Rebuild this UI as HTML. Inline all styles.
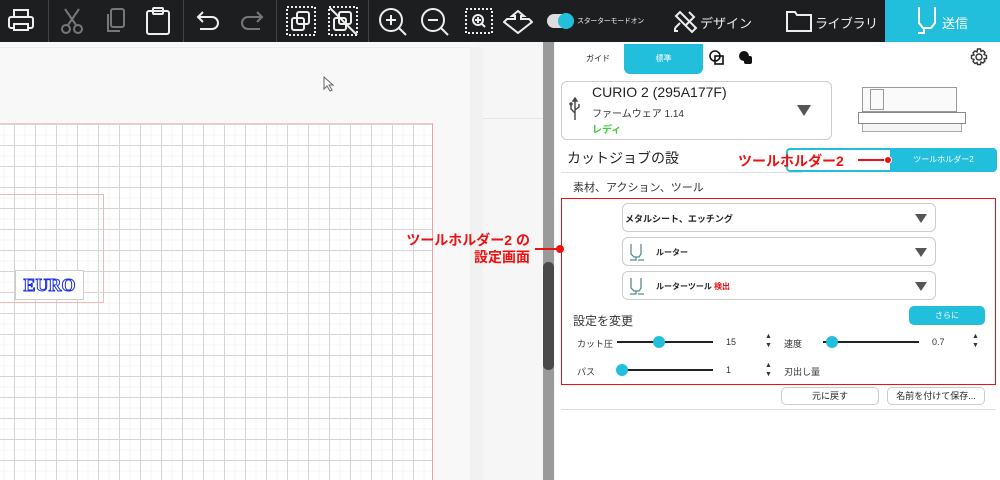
<!DOCTYPE html>
<html><head><meta charset="utf-8"><style>
*{box-sizing:border-box;margin:0;padding:0}
body{width:1000px;height:480px;overflow:hidden;background:#f6f6f6;font-family:"Liberation Sans","Noto Sans CJK JP",sans-serif;position:relative}
.tb{position:absolute;left:0;top:0;width:1000px;height:42px;background:#1d1e20}
.sep{position:absolute;top:0;width:1px;height:42px;background:#444}
.ic{position:absolute;top:6px}
.abs{position:absolute}
.grid{position:absolute;left:0;top:123px;width:433px;height:357px;background-color:#fff;
background-image:linear-gradient(90deg,#d4d4d4 1px,transparent 1px),linear-gradient(#d4d4d4 1px,transparent 1px),linear-gradient(90deg,#f4f4f4 1px,transparent 1px),linear-gradient(#f4f4f4 1px,transparent 1px);
background-size:21px 21px,21px 21px,10.5px 10.5px,10.5px 10.5px;background-position:14px 0,0 0,14px 0,0 0;border-right:1px solid #f0a0a0;border-top:1px solid #f6c8c8}
.panel{position:absolute;left:555px;top:42px;width:445px;height:438px;background:#fff}
.dd{position:absolute;left:622px;width:314px;height:29px;border:1px solid #ccc;border-radius:6px;background:#fff;font-size:9px;font-weight:bold;color:#222}
.tri{position:absolute;right:8px;top:10px;width:0;height:0;border-left:6px solid transparent;border-right:6px solid transparent;border-top:9px solid #555}
.red{color:#f01010;font-weight:bold}
.sl{position:absolute;height:2px;background:#222}
.kn{position:absolute;width:12px;height:12px;border-radius:50%;background:#22bfdc}
.s{font-size:9px;color:#333;position:absolute}
.btn{position:absolute;height:18px;border:1px solid #ccc;border-radius:5px;background:#fff;font-size:9px;text-align:center;line-height:16px;color:#222}
</style></head><body>
<div class="tb">
<svg class="ic" style="left:8px;top:9px" width="26" height="24" viewBox="0 0 26 24" fill="none" stroke="#eee" stroke-width="2"><rect x="6" y="1" width="14" height="7"/><rect x="1" y="8" width="24" height="11" rx="2"/><rect x="6" y="15" width="14" height="6" fill="#1d1e20"/></svg>
<div class="sep" style="left:48px"></div>
<svg class="abs" style="left:60px;top:8px" width="24" height="26" viewBox="0 0 24 26" fill="none" stroke="#777" stroke-width="2"><path d="M5 1L16 17M19 1L8 17"/><circle cx="6" cy="21" r="4"/><circle cx="18" cy="21" r="4"/></svg>
<svg class="abs" style="left:104px;top:8px" width="22" height="26" viewBox="0 0 22 26" fill="none" stroke="#777" stroke-width="2"><rect x="7" y="1" width="13" height="18" rx="2"/><path d="M4 6v17h12"/></svg>
<svg class="abs" style="left:145px;top:7px" width="26" height="28" viewBox="0 0 26 28" fill="none" stroke="#eee" stroke-width="2"><rect x="2" y="4" width="22" height="23" rx="2"/><rect x="8" y="1" width="10" height="6" rx="1"/></svg>
<div class="sep" style="left:183px"></div>
<svg class="abs" style="left:196px;top:10px" width="24" height="22" viewBox="0 0 24 22" fill="none" stroke="#eee" stroke-width="2"><path d="M7 2L2 7l5 5M2 7h14a6 6 0 010 12H4"/></svg>
<svg class="abs" style="left:240px;top:10px" width="24" height="22" viewBox="0 0 24 22" fill="none" stroke="#777" stroke-width="2"><path d="M17 2l5 5-5 5M22 7H8a6 6 0 000 12h12"/></svg>
<div class="sep" style="left:276px"></div>
<svg class="abs" style="left:286px;top:6px" width="30" height="30" viewBox="0 0 30 30" fill="none" stroke="#eee" stroke-width="2"><rect x="1" y="1" width="28" height="28" stroke-dasharray="2 2"/><rect x="11" y="6" width="12" height="12" rx="2"/><rect x="6" y="12" width="12" height="12" rx="2"/></svg>
<svg class="abs" style="left:328px;top:6px" width="30" height="30" viewBox="0 0 30 30" fill="none" stroke="#eee" stroke-width="2"><rect x="1" y="1" width="28" height="28" stroke-dasharray="2 2"/><rect x="11" y="6" width="12" height="12" rx="2"/><rect x="6" y="12" width="12" height="12" rx="2"/><path d="M2 2l27 27"/></svg>
<div class="sep" style="left:368px"></div>
<svg class="abs" style="left:378px;top:7px" width="30" height="30" viewBox="0 0 30 30" fill="none" stroke="#eee" stroke-width="2"><circle cx="13" cy="13" r="11"/><path d="M21 21l7 7M13 8v10M8 13h10"/></svg>
<svg class="abs" style="left:420px;top:7px" width="30" height="30" viewBox="0 0 30 30" fill="none" stroke="#eee" stroke-width="2"><circle cx="13" cy="13" r="11"/><path d="M21 21l7 7M8 13h10"/></svg>
<svg class="abs" style="left:465px;top:8px" width="28" height="28" viewBox="0 0 28 28" fill="none" stroke="#eee" stroke-width="2"><rect x="1" y="1" width="26" height="24" stroke-dasharray="2 2"/><circle cx="13" cy="12" r="5"/><path d="M16 15l4 4M13 9v6M10 12h6"/></svg>
<svg class="abs" style="left:503px;top:10px" width="30" height="24" viewBox="0 0 30 24" fill="none" stroke="#eee" stroke-width="2"><path d="M15 1l6 5h-3v3h8l3 3-14 11L1 12l3-3h8V6H9z"/></svg>
<div class="abs" style="left:547px;top:14px;width:26px;height:14px;border-radius:7px;background:#ddd"></div>
<div class="abs" style="left:558px;top:13px;width:16px;height:16px;border-radius:50%;background:#22bfdc"></div>
<div class="abs" style="left:577px;top:16px;font-size:7px;color:#eee;letter-spacing:-0.3px">スターターモードオン</div>
<svg class="abs" style="left:672px;top:8px" width="26" height="26" viewBox="0 0 26 26" fill="none" stroke="#eee" stroke-width="2"><path d="M4 8l4-4 16 16-4 4zM3 20l5-5M17 4l5 5-9 9M3 20v3h3"/></svg>
<div class="abs" style="left:700px;top:13px;font-size:13px;color:#eee">デザイン</div>
<svg class="abs" style="left:786px;top:10px" width="26" height="22" viewBox="0 0 26 22" fill="none" stroke="#eee" stroke-width="2"><path d="M1 2h8l2 3h14v16H1z"/></svg>
<div class="abs" style="left:815px;top:13px;font-size:13px;color:#eee;letter-spacing:-0.5px">ライブラリ</div>
<div class="abs" style="left:885px;top:0;width:115px;height:42px;background:#22bfdc"></div>
<svg class="abs" style="left:917px;top:6px" width="20" height="30" viewBox="0 0 20 30" fill="none" stroke="#fff" stroke-width="2"><path d="M2 1v16l4 5h8l4-5V1M7 22v5H1"/></svg>
<div class="abs" style="left:942px;top:13px;font-size:13px;color:#fff">送信</div>
</div>
<div class="abs" style="left:0;top:42px;width:478px;height:438px;background:#f8f8f8"></div>
<div class="abs" style="left:0;top:47px;width:470px;height:1px;background:#ececec"></div>
<div class="abs" style="left:470px;top:47px;width:13px;height:433px;background:#f1f1f1"></div>
<div class="abs" style="left:483px;top:118px;width:60px;height:1px;background:#e6e6e6"></div>
<svg class="abs" style="left:323px;top:76px" width="12" height="16" viewBox="0 0 12 16"><path d="M1 1v12l3-3 3 5 2-1-3-5h4z" fill="#fff" stroke="#666"/></svg>
<div class="grid"></div>
<div class="abs" style="left:0;top:194px;width:104px;height:109px;border:1px solid #f0b8b8;border-left:none"></div>
<div class="abs" style="left:15px;top:270px;width:69px;height:30px;background:#fff;border:1px solid #ccc;font-family:'Liberation Serif',serif;font-weight:bold;font-size:18px;color:#fff;-webkit-text-stroke:1px #1a2ee6;text-align:center;line-height:28px">EURO</div>
<div class="abs" style="left:543px;top:42px;width:11px;height:438px;background:#9a9a9a"></div>
<div class="abs" style="left:543px;top:262px;width:11px;height:108px;background:#4a4a4a;border-radius:5px"></div>
<div class="panel"></div>
<div class="abs" style="left:586px;top:53px;font-size:8px;color:#222">ガイド</div>
<div class="abs" style="left:624px;top:44px;width:79px;height:30px;background:#22bfdc;border-radius:0 0 6px 6px;color:#fff;font-size:8px;text-align:center;line-height:30px">標準</div>
<svg class="abs" style="left:709px;top:50px" width="16" height="16" viewBox="0 0 16 16" fill="none" stroke="#111" stroke-width="1.6"><circle cx="6" cy="6" r="5"/><rect x="6" y="6" width="8" height="8"/></svg>
<svg class="abs" style="left:738px;top:50px" width="16" height="16" viewBox="0 0 16 16"><circle cx="6" cy="6" r="5" fill="#111"/><rect x="6" y="6" width="8" height="8" rx="2" fill="#111"/></svg>
<svg class="abs" style="left:970px;top:48px" width="18" height="18" viewBox="0 0 18 18" fill="none" stroke="#333" stroke-width="1.4"><circle cx="9" cy="9" r="3"/><path d="M7.5 1h3l.5 2.5 2-1 2 2-1 2L16.5 7.5v3l-2.5.5 1 2-2 2-2-1-.5 2.5h-3L7 14.5l-2 1-2-2 1-2L1.5 10.5v-3L4 7 3 5l2-2 2 1z"/></svg>
<div class="abs" style="left:561px;top:81px;width:271px;height:59px;border:1px solid #ccc;border-radius:6px;background:#fff"></div>
<svg class="abs" style="left:569px;top:97px" width="12" height="24" viewBox="0 0 12 24" fill="none" stroke="#444" stroke-width="1.4"><path d="M6 1v22M6 1l-2 3h4zM6 16L2 12V8M6 13l4-3V7"/><circle cx="2" cy="7" r="1"/></svg>
<div class="abs" style="left:592px;top:84px;font-size:14px;color:#222">CURIO 2 (295A177F)</div>
<div class="abs" style="left:592px;top:105px;font-size:10px;color:#333">ファームウェア 1.14</div>
<div class="abs" style="left:592px;top:121px;font-size:10px;color:#3ccf3c;font-weight:bold">レディ</div>
<div class="abs" style="left:797px;top:105px;width:0;height:0;border-left:7px solid transparent;border-right:7px solid transparent;border-top:11px solid #555"></div>
<div class="abs" style="left:862px;top:87px;width:95px;height:25px;border:1px solid #999;background:#fafafa"></div>
<div class="abs" style="left:870px;top:89px;width:14px;height:21px;border:1px solid #999"></div>
<div class="abs" style="left:858px;top:112px;width:108px;height:12px;border:1px solid #888;background:#fff"></div>
<div class="abs" style="left:862px;top:124px;width:100px;height:8px;border:1px solid #aaa;border-top:none;background:#f4f4f4"></div>
<div class="abs" style="left:567px;top:148px;font-size:14px;color:#222">カットジョブの設</div>
<div class="abs" style="left:561px;top:172px;width:242px;height:1px;background:#ddd"></div>
<div class="abs" style="left:786px;top:148px;width:106px;height:24px;border:2px solid #22bfdc;border-radius:4px 0 0 4px;background:#fff"></div>
<div class="abs" style="left:890px;top:148px;width:107px;height:24px;background:#22bfdc;border-radius:0 4px 4px 0;color:#fff;font-size:8px;text-align:center;line-height:24px">ツールホルダー2</div>
<div class="abs red" style="left:738px;top:151px;font-size:14px">ツールホルダー2</div>
<div class="abs" style="left:858px;top:159px;width:30px;height:2px;background:#f01010"></div>
<div class="abs" style="left:884px;top:156px;width:8px;height:8px;border-radius:50%;background:#f01010;border:1px solid #fff"></div>
<div class="abs" style="left:573px;top:179px;font-size:11px;color:#333">素材、アクション、ツール</div>
<div class="abs" style="left:561px;top:198px;width:435px;height:187px;border:1.5px solid #f01010"></div>
<div class="abs red" style="left:380px;top:232px;font-size:14px;text-align:right;width:150px;line-height:17px">ツールホルダー2 の<br>設定画面</div>
<div class="abs" style="left:535px;top:248px;width:24px;height:2px;background:#f01010"></div>
<div class="abs" style="left:556px;top:245px;width:8px;height:8px;border-radius:50%;background:#f01010"></div>
<div class="dd" style="top:203px"><span class="abs" style="left:2px;top:8px">メタルシート、エッチング</span><div class="tri"></div></div>
<div class="dd" style="top:237px"><svg class="abs" style="left:6px;top:5px" width="16" height="18" viewBox="0 0 16 18" fill="none" stroke="#5a8a8a" stroke-width="1.3"><path d="M2 1v10l3 3h5l2-3V1M7 14v3H1M9 17h6"/></svg><span class="abs" style="left:33px;top:9px;font-size:8px">ルーター</span><div class="tri"></div></div>
<div class="dd" style="top:271px"><svg class="abs" style="left:6px;top:5px" width="16" height="18" viewBox="0 0 16 18" fill="none" stroke="#5a8a8a" stroke-width="1.3"><path d="M2 1v10l3 3h5l2-3V1M7 14v3H1M9 17h6"/></svg><span class="abs" style="left:33px;top:9px;font-size:8px">ルーターツール <span class="red">検出</span></span><div class="tri"></div></div>
<div class="abs" style="left:573px;top:312px;font-size:12px;color:#333">設定を変更</div>
<div class="abs" style="left:909px;top:306px;width:76px;height:19px;background:#22bfdc;border-radius:5px;color:#fff;font-size:8px;text-align:center;line-height:19px">さらに</div>
<div class="s" style="left:577px;top:337px">カット圧</div>
<div class="sl" style="left:617px;top:341px;width:96px"></div><div class="kn" style="left:653px;top:336px"></div>
<div class="s" style="left:726px;top:337px">15</div>
<div class="s" style="left:765px;top:332px;font-size:7px;line-height:9px">▲<br>▼</div>
<div class="s" style="left:784px;top:337px">速度</div>
<div class="sl" style="left:823px;top:341px;width:96px"></div><div class="kn" style="left:826px;top:336px"></div>
<div class="s" style="left:932px;top:337px">0.7</div>
<div class="s" style="left:972px;top:332px;font-size:7px;line-height:9px">▲<br>▼</div>
<div class="s" style="left:577px;top:365px">パス</div>
<div class="sl" style="left:617px;top:369px;width:96px"></div><div class="kn" style="left:616px;top:364px"></div>
<div class="s" style="left:726px;top:365px">1</div>
<div class="s" style="left:765px;top:361px;font-size:7px;line-height:9px">▲<br>▼</div>
<div class="s" style="left:784px;top:365px">刃出し量</div>
<div class="btn" style="left:781px;top:387px;width:98px">元に戻す</div>
<div class="btn" style="left:887px;top:387px;width:98px">名前を付けて保存...</div>
<div class="abs" style="left:561px;top:409px;width:435px;height:1px;background:#ddd"></div>
</body></html>
